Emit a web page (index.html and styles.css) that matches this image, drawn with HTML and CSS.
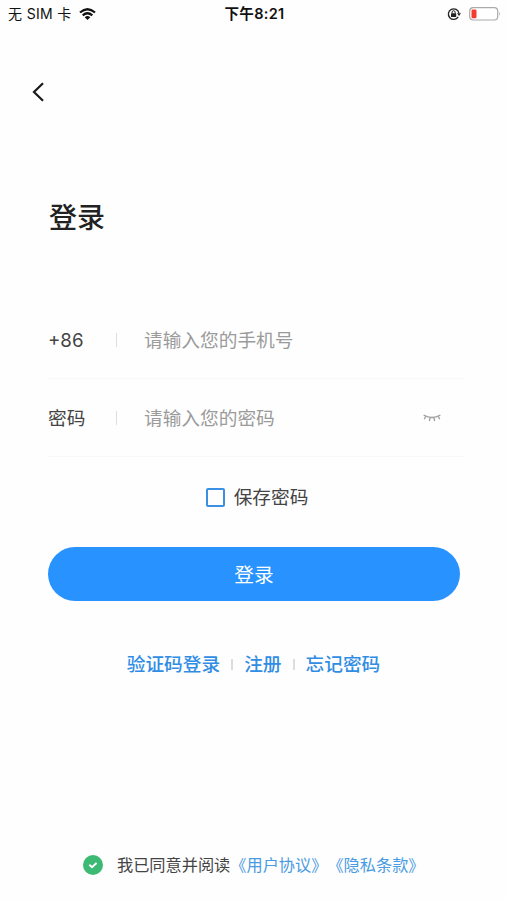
FILE: index.html
```html
<!DOCTYPE html>
<html lang="zh-CN">
<head>
<meta charset="utf-8">
<meta name="viewport" content="width=device-width, initial-scale=1">
<title>登录</title>
<link rel="stylesheet" href="styles.css">
</head>
<body>
<div class="screen">
  <div class="status">
    <div class="carrier">
      <span>无 SIM 卡</span>
      <svg class="wifi" viewBox="0 0 17 12" width="17" height="12" fill="none" stroke="#111" stroke-width="2.2">
        <path d="M1 4.5Q8.500-2 16 4.500"/>
        <path d="M3.700 7.300Q8.500 3.200 13.300 7.300"/>
        <path d="M8.500 12L5.700 9.200Q8.500 6.900 11.300 9.200Z" fill="#111" stroke="none"/>
      </svg>
    </div>
    <div class="time">下午8:21</div>
    <div class="indicators">
      <svg viewBox="0 0 14 14" width="14" height="14" fill="none" stroke="#222" stroke-width="1.300">
        <path d="M11.200 9.900A5.300 5.300 0 1 1 11.900 6.200"/>
        <path d="M10 6.200h4L12 9z" fill="#222" stroke="none"/>
        <rect x="4" y="6.300" width="5.200" height="3.700" rx=".5" fill="#222" stroke="none"/>
        <path d="M5.100 6.500V5.200a1.500 1.500 0 0 1 3 0v1.300" stroke-width="1"/>
      </svg>
      <svg viewBox="0 0 32 14" width="32" height="14">
        <rect x=".7" y=".7" width="28" height="12.300" rx="3.500" fill="#fff" stroke="#aaa" stroke-width="1.200"/>
        <rect x="2.500" y="2.500" width="5" height="8.800" rx="1.300" fill="#f5392f"/>
        <path d="M30 4.800q1.700 2 0 4z" fill="#aaa"/>
      </svg>
    </div>
  </div>

  <div class="nav">
    <svg viewBox="0 0 14 20" width="14" height="20" fill="none" stroke="#1a1a1a" stroke-width="2.200">
      <path d="M12 1.300L3 10l9 8.700"/>
    </svg>
  </div>

  <h1 class="title">登录</h1>

  <div class="form">
    <div class="field">
      <span class="label code">+86</span>
      <span class="bar"></span>
      <span class="hint">请输入您的手机号</span>
    </div>
    <div class="field">
      <span class="label">密码</span>
      <span class="bar"></span>
      <span class="hint">请输入您的密码</span>
      <svg class="eye" viewBox="0 0 18 8" width="18" height="8" fill="none" stroke="#a3a3a3" stroke-width="1.400">
        <path d="M.6 1Q9 6 17.400 1M2.700 2.300L1.300 5.200M7 3.700L6.400 7M11 3.700l.6 3.300M15.300 2.300l1.400 2.900"/>
      </svg>
    </div>
  </div>

  <div class="remember"><span class="box"></span><span class="text">保存密码</span></div>
  <div class="submit">登录</div>
  <div class="links">
    <span>验证码登录</span><i class="sep"></i><span>注册</span><i class="sep"></i><span>忘记密码</span>
  </div>

  <div class="agree">
    <svg viewBox="0 0 20 20" width="20" height="20">
      <circle cx="10" cy="10" r="10" fill="#3cb973"/>
      <path d="M6.300 9.800l2.700 2.500 4.600-4.300" fill="none" stroke="#fff" stroke-width="1.900"/>
    </svg>
    <span class="terms">我已同意并阅读<b>《用户协议》</b><b>《隐私条款》</b></span>
  </div>
</div>
</body>
</html>
```
FILE: styles.css
```css
* {
  box-sizing: border-box;
}

body {
  margin: 0;
  background: #fefefe;
  color: #444;
  font-family: "Inter", "Noto Sans CJK SC", sans-serif;
  text-spacing-trim: space-all;
}

svg {
  display: block;
  flex: none;
}

.screen {
  display: flex;
  flex-direction: column;
  height: 900px;
  overflow: hidden;
  white-space: nowrap;
}

.status {
  display: grid;
  grid-template-columns: 1fr auto 1fr;
  align-items: center;
  height: 27px;
  padding: 0 6px 0 8px;
  color: #111;
  font-size: 14px;
}

.carrier {
  display: flex;
  align-items: center;
  gap: 7px;
  letter-spacing: 0.35px;
}

.carrier span,
.time {
  padding-bottom: 2px;
}

.time {
  font-size: 14.5px;
  font-weight: 600;
  letter-spacing: 0.3px;
}

.indicators {
  display: flex;
  justify-content: flex-end;
  gap: 8px;
}

.nav {
  display: flex;
  align-items: center;
  height: 130px;
  padding-left: 31px;
}

.title {
  height: 60px;
  margin: 31px 0 0 49px;
  color: #222;
  font-size: 28px;
  font-weight: 500;
  line-height: 60px;
}

.form {
  margin: 53px 43px 0 48px;
}

.field {
  display: flex;
  align-items: center;
  height: 78px;
  border-bottom: 1px solid #f8f8f8;
  font-size: 18.7px;
}

.label {
  width: 68px;
  padding-bottom: 2px;
}

.code {
  padding: 2px 0 0;
}

.bar {
  width: 1px;
  height: 14px;
  margin-right: 27px;
  background: #ddd;
}

.hint {
  padding-bottom: 3px;
  color: #9b9b9b;
}

.eye {
  margin: 0 23px 0 auto;
}

.remember {
  display: flex;
  align-items: center;
  justify-content: center;
  gap: 9px;
  height: 40px;
  margin-top: 20px;
  padding-left: 7px;
  font-size: 18.7px;
}

.remember .text {
  padding-bottom: 3px;
}

.box {
  width: 19px;
  height: 19px;
  border: 2px solid #3b90e4;
  border-radius: 2px;
}

.submit {
  height: 54px;
  margin: 30px 47px 0 48px;
  padding-top: 1px;
  border-radius: 27px;
  background: #2893ff;
  color: #fff;
  font-size: 19.7px;
  line-height: 54px;
  text-align: center;
}

.links {
  display: flex;
  align-items: center;
  justify-content: center;
  height: 40px;
  margin-top: 43px;
  color: #318de4;
  font-size: 18.7px;
  font-weight: 500;
}

.links span {
  padding-bottom: 3px;
}

.sep {
  width: 2px;
  height: 11px;
  margin: 0 11px;
  background: #ddd;
}

.agree {
  display: flex;
  align-items: center;
  gap: 14px;
  height: 40px;
  margin: 161px 0 0 83px;
  font-size: 16.2px;
}

.terms {
  padding-bottom: 2px;
}

.agree b {
  color: #4a9be3;
  font-weight: 400;
}
```
